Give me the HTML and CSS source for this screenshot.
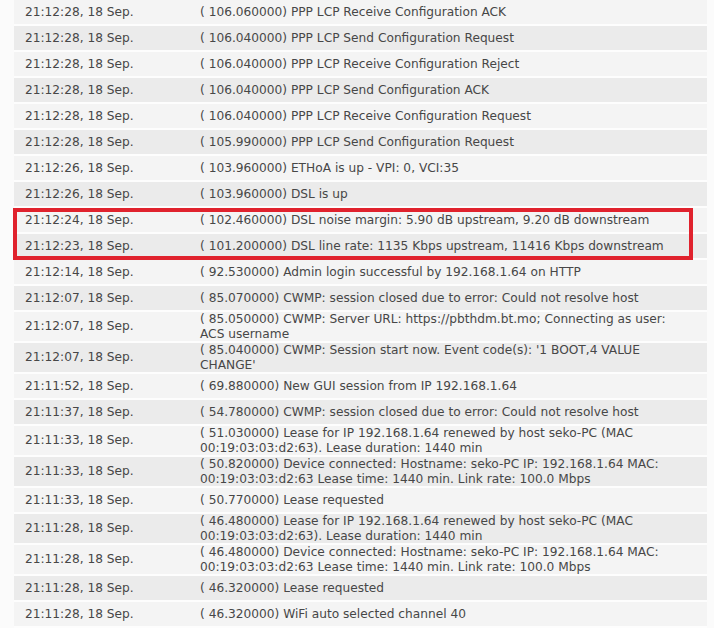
FILE: index.html
```html
<!DOCTYPE html>
<html>
<head>
<meta charset="utf-8">
<link rel="stylesheet" href="styles.css">
</head>
<body>
<div class="wrap">
<table class="log">
<tbody>
<tr><td class="time">21:12:28, 18 Sep.</td><td class="msg">( 106.060000) PPP LCP Receive Configuration ACK</td></tr>
<tr><td class="time">21:12:28, 18 Sep.</td><td class="msg">( 106.040000) PPP LCP Send Configuration Request</td></tr>
<tr><td class="time">21:12:28, 18 Sep.</td><td class="msg">( 106.040000) PPP LCP Receive Configuration Reject</td></tr>
<tr><td class="time">21:12:28, 18 Sep.</td><td class="msg">( 106.040000) PPP LCP Send Configuration ACK</td></tr>
<tr><td class="time">21:12:28, 18 Sep.</td><td class="msg">( 106.040000) PPP LCP Receive Configuration Request</td></tr>
<tr><td class="time">21:12:28, 18 Sep.</td><td class="msg">( 105.990000) PPP LCP Send Configuration Request</td></tr>
<tr><td class="time">21:12:26, 18 Sep.</td><td class="msg">( 103.960000) ETHoA is up - VPI: 0, VCI:35</td></tr>
<tr><td class="time">21:12:26, 18 Sep.</td><td class="msg">( 103.960000) DSL is up</td></tr>
<tr><td class="time">21:12:24, 18 Sep.</td><td class="msg">( 102.460000) DSL noise margin: 5.90 dB upstream, 9.20 dB downstream</td></tr>
<tr><td class="time">21:12:23, 18 Sep.</td><td class="msg">( 101.200000) DSL line rate: 1135 Kbps upstream, 11416 Kbps downstream</td></tr>
<tr><td class="time">21:12:14, 18 Sep.</td><td class="msg">( 92.530000) Admin login successful by 192.168.1.64 on HTTP</td></tr>
<tr><td class="time">21:12:07, 18 Sep.</td><td class="msg">( 85.070000) CWMP: session closed due to error: Could not resolve host</td></tr>
<tr><td class="time">21:12:07, 18 Sep.</td><td class="msg">( 85.050000) CWMP: Server URL: https://pbthdm.bt.mo; Connecting as user:<br>ACS username</td></tr>
<tr><td class="time">21:12:07, 18 Sep.</td><td class="msg">( 85.040000) CWMP: Session start now. Event code(s): '1 BOOT,4 VALUE<br>CHANGE'</td></tr>
<tr><td class="time">21:11:52, 18 Sep.</td><td class="msg">( 69.880000) New GUI session from IP 192.168.1.64</td></tr>
<tr><td class="time">21:11:37, 18 Sep.</td><td class="msg">( 54.780000) CWMP: session closed due to error: Could not resolve host</td></tr>
<tr><td class="time">21:11:33, 18 Sep.</td><td class="msg">( 51.030000) Lease for IP 192.168.1.64 renewed by host seko-PC (MAC<br>00:19:03:03:d2:63). Lease duration: 1440 min</td></tr>
<tr><td class="time">21:11:33, 18 Sep.</td><td class="msg">( 50.820000) Device connected: Hostname: seko-PC IP: 192.168.1.64 MAC:<br>00:19:03:03:d2:63 Lease time: 1440 min. Link rate: 100.0 Mbps</td></tr>
<tr><td class="time">21:11:33, 18 Sep.</td><td class="msg">( 50.770000) Lease requested</td></tr>
<tr><td class="time">21:11:28, 18 Sep.</td><td class="msg">( 46.480000) Lease for IP 192.168.1.64 renewed by host seko-PC (MAC<br>00:19:03:03:d2:63). Lease duration: 1440 min</td></tr>
<tr><td class="time">21:11:28, 18 Sep.</td><td class="msg">( 46.480000) Device connected: Hostname: seko-PC IP: 192.168.1.64 MAC:<br>00:19:03:03:d2:63 Lease time: 1440 min. Link rate: 100.0 Mbps</td></tr>
<tr><td class="time">21:11:28, 18 Sep.</td><td class="msg">( 46.320000) Lease requested</td></tr>
<tr><td class="time">21:11:28, 18 Sep.</td><td class="msg">( 46.320000) WiFi auto selected channel 40</td></tr>
</tbody>
</table>
<div class="highlight"></div>
</div>
</body>
</html>
```

FILE: styles.css
```css
html, body {
  margin: 0;
  padding: 0;
  background: #fbfbfb;
}
.wrap {
  position: relative;
  padding: 0 7px 0 14px;
}
.log {
  width: 100%;
  border-collapse: collapse;
  font-family: "DejaVu Sans", Verdana, sans-serif;
  font-size: 12.2px;
  line-height: 14.5px;
  color: #474747;
}
.log td {
  height: 24px;
  padding: 0 0 0 11px;
  border-bottom: 2px solid #fdfdfd;
  vertical-align: middle;
}
.log tr:nth-child(odd) td { background: #f4f4f4; }
.log tr:nth-child(even) td { background: #ebebeb; }
.log td.time {
  width: 164px;
  white-space: nowrap;
}
.log td.msg {
  padding-right: 6px;
}
.highlight {
  position: absolute;
  left: 13px;
  top: 208px;
  width: 672px;
  height: 44px;
  border: 4px solid #e0222d;
}
```
